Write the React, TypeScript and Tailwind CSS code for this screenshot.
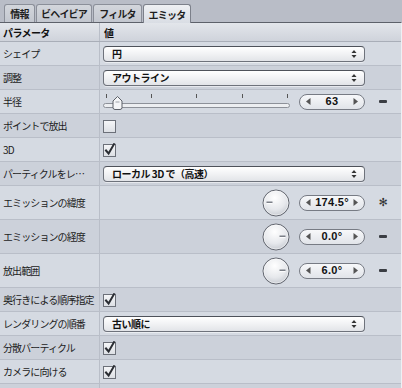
import type { ReactNode } from 'react'

const FONT = "font-['Noto_Sans_CJK_JP','Noto_Sans',sans-serif]"

function Tab({ label, active, w }: { label: string; active?: boolean; w: string }) {
  return (
    <div
      className={`${w} flex items-center justify-center whitespace-nowrap rounded-t-[3px] border border-b-0 text-[10px] tracking-[-0.8px] font-bold text-[#1e1e1e] ${
        active
          ? 'border-[#7c808a] bg-gradient-to-b from-[#eef0f3] to-[#d9dde4] h-[19px] -mb-px relative z-10'
          : 'h-[18px] border-[#8b8f99] bg-gradient-to-b from-[#d3d6dc] to-[#c3c7cf]'
      }`}
    >
      {label}
    </div>
  )
}

function Popup({ text }: { text: string }) {
  return (
    <div className="w-[262px] h-[16px] flex items-center justify-between rounded-[4px] border border-[#6e727b] border-t-[#4e525a] bg-gradient-to-b from-[#ffffff] via-[#f1f2f4] to-[#e2e4e8] pl-[8px] pr-[7px] shadow-[0_1px_0_rgba(255,255,255,0.5)]">
      <span className="text-[10px] tracking-[-0.5px] font-bold text-[#111] leading-none whitespace-nowrap">{text}</span>
      <svg width="6" height="10" viewBox="0 0 6 10">
        <path d="M3 1 L5.5 4 L0.5 4 Z" fill="#333" />
        <path d="M3 9 L5.5 6 L0.5 6 Z" fill="#333" />
      </svg>
    </div>
  )
}

function Check({ on }: { on?: boolean }) {
  return (
    <svg width="14" height="14" viewBox="0 0 14 14" className="block">
      <defs>
        <linearGradient id="cb" x1="0" y1="0" x2="0" y2="1">
          <stop offset="0" stopColor="#f6f7f9" />
          <stop offset="1" stopColor="#dcdfe4" />
        </linearGradient>
      </defs>
      <rect x="0.5" y="1.5" width="12" height="12" fill="url(#cb)" stroke="#6c7079" />
      {on && <path d="M3 7.5 L5.6 10.5 L11 1.2" fill="none" stroke="#2a2d33" strokeWidth="2" strokeLinecap="square" />}
    </svg>
  )
}

function ValueField({ value }: { value: string }) {
  return (
    <div className="w-[66px] h-[16px] flex items-center justify-between rounded-full border border-[#777b84] bg-gradient-to-b from-[#f7f8fa] to-[#e1e4e9] px-[6px]">
      <svg width="5" height="7" viewBox="0 0 5 7"><path d="M4.5 0 L0 3.5 L4.5 7 Z" fill="#555" /></svg>
      <span className="text-[11px] font-bold text-[#111] leading-none font-['Liberation_Sans',sans-serif] tracking-[0.3px]">{value}</span>
      <svg width="5" height="7" viewBox="0 0 5 7"><path d="M0.5 0 L5 3.5 L0.5 7 Z" fill="#555" /></svg>
    </div>
  )
}

function Minus() {
  return <div className="w-[8px] h-[3px] bg-[#3a3d43] rounded-[1px]" />
}

function Star() {
  return <span className="text-[11px] leading-none text-[#333] font-['DejaVu_Sans',sans-serif]">✻</span>
}

function Dial({ left }: { left?: boolean }) {
  return (
    <svg width="28" height="28" viewBox="0 0 28 28" className="block">
      <defs>
        <radialGradient id="dg" cx="0.45" cy="0.3" r="0.75">
          <stop offset="0" stopColor="#ffffff" />
          <stop offset="0.6" stopColor="#e6e8ec" />
          <stop offset="1" stopColor="#c2c6cd" />
        </radialGradient>
      </defs>
      <circle cx="14" cy="14" r="13" fill="url(#dg)" stroke="#5f636c" strokeWidth="1" />
      <circle cx="14" cy="14" r="12" fill="none" stroke="#ffffff" strokeOpacity="0.6" strokeWidth="0.8" />
      {left ? (
        <>
          <rect x="4.5" y="12.5" width="6" height="1.6" fill="#7b7f87" />
          <rect x="4.5" y="14.1" width="6" height="1" fill="#ffffff" />
        </>
      ) : (
        <>
          <rect x="17.5" y="12.5" width="6" height="1.6" fill="#7b7f87" />
          <rect x="17.5" y="14.1" width="6" height="1" fill="#ffffff" />
        </>
      )}
    </svg>
  )
}

function Slider() {
  return (
    <svg width="188" height="20" viewBox="0 0 188 20" className="block">
      {[3, 48, 93, 139, 184].map((x) => (
        <line key={x} x1={x + 0.5} y1="2" x2={x + 0.5} y2="6" stroke="#555" strokeWidth="1" />
      ))}
      <rect x="0.5" y="11.5" width="186" height="4" rx="2" fill="#eceef1" stroke="#8d9199" />
      <path d="M10 15.5 L10 9 L14.5 4.5 L19 9 L19 15.5 Q19 17.5 17 17.5 L12 17.5 Q10 17.5 10 15.5 Z" fill="#f4f5f7" stroke="#5c6068" />
      <line x1="12.5" y1="10" x2="16.5" y2="10" stroke="#a0a4ab" />
    </svg>
  )
}

function Row({ label, h, shade, children }: { label: string; h: string; shade?: boolean; children?: ReactNode }) {
  return (
    <div className={`flex ${h} border-b border-[#b9bec8] ${shade ? 'bg-[#ccd1da]' : 'bg-[#d5dae2]'}`}>
      <div className="w-[100px] shrink-0 border-r border-[#b9bec8] pl-[3px] flex items-center text-[10px] tracking-[-0.9px] text-[#1c1c1c] whitespace-nowrap overflow-hidden">
        {label}
      </div>
      <div className="flex-1 flex items-center pl-[3px]">{children}</div>
    </div>
  )
}

function NumRow({ label, value, dial, left, icon, shade }: { label: string; value: string; dial?: boolean; left?: boolean; icon: ReactNode; shade?: boolean }) {
  return (
    <Row label={label} h="h-[34px]" shade={shade}>
      <div className="flex items-center">
        <div className="w-[196px] flex justify-end pr-[9px]">{dial && <Dial left={left} />}</div>
        <ValueField value={value} />
        <div className="w-[34px] flex justify-center pl-[2px]">{icon}</div>
      </div>
    </Row>
  )
}

export default function App() {
  return (
    <div className={`w-[402px] h-[388px] overflow-hidden bg-[#b9bdc7] ${FONT}`}>
      <div className="h-[22px] flex items-end gap-[1px] pl-[4px]">
        <Tab label="情報" w="w-[31px]" />
        <Tab label="ビヘイビア" w="w-[56px]" />
        <Tab label="フィルタ" w="w-[49px]" />
        <Tab label="エミッタ" w="w-[48px]" active />
      </div>
      <div className="border-t border-r border-[#5d616a] border-r-[#eef0f4]">
        <div className="flex h-[19px] border-b border-[#a9aeb8] bg-gradient-to-b from-[#e3e6eb] to-[#cfd3db]">
          <div className="w-[100px] border-r border-[#b9bec8] pl-[3px] flex items-center text-[10px] tracking-[-0.6px] font-bold text-[#111]">パラメータ</div>
          <div className="flex-1 pl-[4px] flex items-center text-[10px] font-bold text-[#111]">値</div>
        </div>
        <Row label="シェイプ" h="h-[24px]"><Popup text="円" /></Row>
        <Row label="調整" h="h-[24px]" shade><Popup text="アウトライン" /></Row>
        <Row label="半径" h="h-[24px]">
          <div className="flex items-center">
            <Slider />
            <div className="ml-[8px]"><ValueField value="63" /></div>
            <div className="w-[34px] flex justify-center pl-[2px]"><Minus /></div>
          </div>
        </Row>
        <Row label="ポイントで放出" h="h-[24px]" shade><Check /></Row>
        <Row label="3D" h="h-[24px]"><Check on /></Row>
        <Row label="パーティクルをレ…" h="h-[24px]" shade><Popup text="ローカル 3D で（高速）" /></Row>
        <NumRow label="エミッションの緯度" value="174.5°" dial left icon={<Star />} />
        <NumRow label="エミッションの経度" value="0.0°" dial icon={<Minus />} shade />
        <NumRow label="放出範囲" value="6.0°" dial icon={<Minus />} />
        <Row label="奥行きによる順序指定" h="h-[24px]" shade><Check on /></Row>
        <Row label="レンダリングの順番" h="h-[24px]"><Popup text="古い順に" /></Row>
        <Row label="分散パーティクル" h="h-[24px]" shade><Check on /></Row>
        <Row label="カメラに向ける" h="h-[24px]"><Check on /></Row>
        <Row label="" h="h-[24px]" shade />
      </div>
    </div>
  )
}
